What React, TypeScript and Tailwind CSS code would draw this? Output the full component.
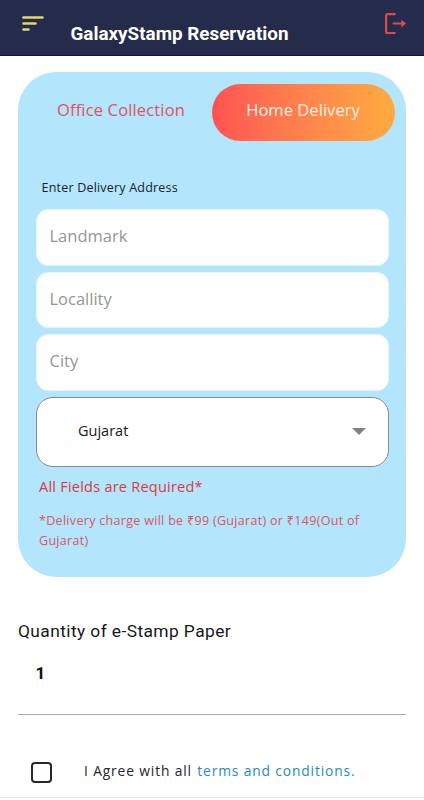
import React from 'react';

function Header() {
  return (
    <header className="flex h-14 shrink-0 items-start border-b border-[#10143a] bg-[#252b4a] pl-[22px] pr-[17px]">
      <svg className="mt-[15px] h-4 w-[23px] shrink-0" viewBox="0 0 23 16" fill="none" stroke="#e3d966" strokeWidth="2.6" strokeLinecap="round">
        <path d="M1.5 2.5H20.5M1.5 8.5H13.5M1.5 14.5H6.5" />
      </svg>
      <h1 className="ml-[25.5px] mt-[20px] whitespace-nowrap font-['Roboto',sans-serif] text-[18.85px] font-bold leading-7 text-white">
        GalaxyStamp Reservation
      </h1>
      <svg className="ml-auto mt-[13px] h-[22px] w-[23px] shrink-0" viewBox="0 0 23 22" fill="none" stroke="#dc4a4a" strokeWidth="2.2" strokeLinecap="round">
        <path d="M10.8 1.2H3.2Q2.1 1.2 2.1 2.2V18.9Q2.1 20 3.2 20H10.8M9.5 10.5H18" />
        <path d="M17.3 6.6L22 10.5L17.3 14.4Z" fill="#dc4a4a" stroke="none" />
      </svg>
    </header>
  );
}

function Field({ label }: { label: string }) {
  return (
    <input
      aria-label={label}
      placeholder={label}
      className="block h-[56.5px] w-full rounded-[12px] border border-[#e2f5fe] bg-white px-[13px] pb-[3px] text-[16.5px] tracking-normal placeholder:text-[#969696]"
    />
  );
}

export default function App() {
  return (
    <div className="flex h-[800px] w-[424px] flex-col overflow-hidden bg-white font-['Open_Sans','Noto_Sans',sans-serif]">
      <Header />
      <main className="flex flex-1 flex-col px-[18px] pt-4">
        <section className="h-[505px] shrink-0 rounded-[38px] bg-[#b3e5fc] pl-[17.5px] pr-[17.5px] pt-3">
          <div className="-mr-[6px] flex h-[56px]">
            <button className="h-[52px] flex-1 whitespace-nowrap pr-[5px] text-[16.5px] tracking-[0.15px] text-[#e2525a]">Office Collection</button>
            <button className="h-[56.5px] w-[183px] rounded-full bg-gradient-to-r from-[#ff5252] to-[#ffab40] pb-1 text-[16.5px] tracking-[0.05px] text-[#fff3e6]">
              Home Delivery
            </button>
          </div>
          <p className="ml-[6px] mt-[38px] text-[12.5px] leading-5 tracking-[0.2px] text-[#17242c]">Enter Delivery Address</p>
          <div className="mt-[11px] flex flex-col gap-[6px]">
            <Field label="Landmark" />
            <Field label="Locallity" />
            <Field label="City" />
            <button className="flex h-[70px] items-center justify-between rounded-[17px] border border-[#858b8e] bg-white pl-[41.5px] pr-[21.5px] text-[14.5px] text-[#171717]">
              <span className="pb-[2px]">Gujarat</span>
              <svg className="h-[7px] w-[14px]" viewBox="0 0 14 7" fill="#838383"><path d="M0 0H14L7 7Z" /></svg>
            </button>
          </div>
          <div className="ml-[3.5px]">
            <p className="mt-[10px] text-[14.5px] leading-5 tracking-[0.24px] text-[#d93a3c]">All Fields are Required*</p>
            <p className="mt-[14px] whitespace-nowrap text-[12.5px] leading-5 tracking-[0.31px] text-[#dc5560]">
              *Delivery charge will be ₹99 (Gujarat) or ₹149(Out of<br />Gujarat)
            </p>
          </div>
        </section>
        <h2 className="mt-[42px] whitespace-nowrap font-['Roboto',sans-serif] text-[17.4px] leading-6 tracking-[0.4px] text-[#171717]">
          Quantity of e-Stamp Paper
        </h2>
        <div className="mt-[18px] flex h-[54px] shrink-0 border-b border-[#adadad] pl-[17.5px] font-['Roboto',sans-serif] text-[17px] font-bold leading-6 text-[#111]">1</div>
        <div className="mt-[46px] flex h-[22px] shrink-0 items-center pl-[13px]">
          <span role="checkbox" aria-checked="false" className="h-[21px] w-[21px] rounded-[4px] border-2 border-[#26262c]" />
          <p className="ml-8 whitespace-nowrap pb-[2px] text-[13.8px] leading-5 tracking-[0.86px] text-[#252525]">
            I Agree with all <span className="ml-[1px] text-[#2688c8]">terms and conditions.</span>
          </p>
        </div>
      </main>
      <footer className="h-[3px] shrink-0 border-t border-[#e8e8e8]" />
    </div>
  );
}
